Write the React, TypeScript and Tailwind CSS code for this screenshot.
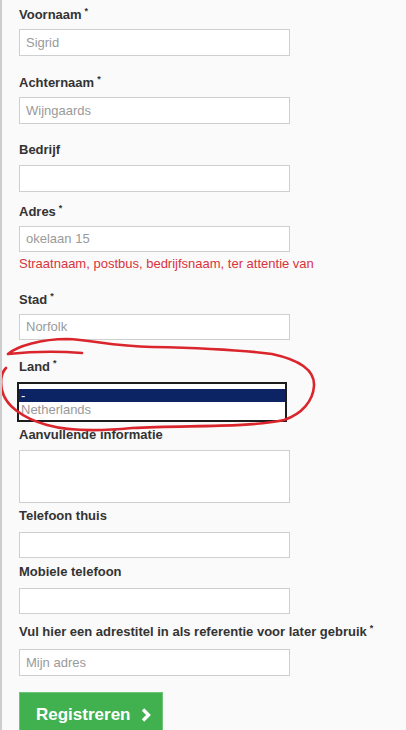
import React from "react";

const font = { fontFamily: '"Liberation Sans", Arial, sans-serif' };

const Label = ({ text, req, mb }: { text: string; req?: boolean; mb: string }) => (
  <div className={`h-[18px] text-[13px] leading-[18px] font-bold text-[#333] ${mb}`}>
    {text}
    {req && <span className="text-[9px] leading-none ml-[3px] relative -top-[5px]">*</span>}
  </div>
);

const Input = ({ value, h = "h-[27px]" }: { value?: string; h?: string }) => (
  <div className={`w-[271px] ${h} bg-white border border-[#cfcfcf] px-[6px] flex items-center text-[13px] text-[#9a9a9a]`}>
    {value}
  </div>
);

const App = () => {
  return (
    <div style={font} className="relative w-[406px] h-[730px] overflow-hidden bg-[#fafafa] border-l-2 border-[#cdcdcd]">
      <div className="pl-[17px] pt-[6px]">
        <Label text="Voornaam" req mb="mb-[5px]" />
        <Input value="Sigrid" />

        <div className="mt-[18px]">
          <Label text="Achternaam" req mb="mb-[5px]" />
          <Input value="Wijngaards" />
        </div>

        <div className="mt-[17px]">
          <Label text="Bedrijf" mb="mb-[6px]" />
          <Input />
        </div>

        <div className="mt-[11px]">
          <Label text="Adres" req mb="mb-[5px]" />
          <Input value="okelaan 15" h="h-[26px]" />
          <div className="mt-[3px] text-[13px] leading-[18px] text-[#d9333d]">
            Straatnaam, postbus, bedrijfsnaam, ter attentie van
          </div>
        </div>

        <div className="mt-[18px]">
          <Label text="Stad" req mb="mb-[5px]" />
          <Input value="Norfolk" h="h-[26px]" />
        </div>

        <div className="mt-[18px]">
          <Label text="Land" req mb="mb-[6px]" />
          <div className="-ml-[2px] w-[270px] h-[40px] border-2 border-[#1c1c1c] bg-white pt-[5px]">
            <div className="h-[13px] bg-[#0c2463] text-white text-[13px] leading-[13px] pl-[2px]">-</div>
            <div className="h-[15px] text-[#9a9a9a] text-[13px] leading-[15px] pl-[2px]">Netherlands</div>
          </div>
        </div>

        <div className="mt-[4px]">
          <Label text="Aanvullende informatie" mb="mb-[6px]" />
          <Input h="h-[53px]" />
        </div>

        <div className="mt-[4px]">
          <Label text="Telefoon thuis" mb="mb-[7px]" />
          <Input h="h-[26px]" />
        </div>

        <div className="mt-[5px]">
          <Label text="Mobiele telefoon" mb="mb-[7px]" />
          <Input h="h-[26px]" />
        </div>

        <div className="mt-[9px]">
          <Label text="Vul hier een adrestitel in als referentie voor later gebruik" req mb="mb-[8px]" />
          <Input value="Mijn adres" />
        </div>

        <button className="mt-[16px] w-[144px] h-[44px] bg-[#41b14f] border border-[#6cc476] flex items-start pt-[12px] pl-[16px] gap-[11px] text-white text-[17px] leading-[20px] font-bold">
          Registreren
          <svg width="11" height="14" viewBox="0 0 11 14" className="mt-[3px]">
            <path d="M2 1.5 L7.5 7 L2 12.5" fill="none" stroke="white" strokeWidth="3.4" />
          </svg>
        </button>
      </div>

      <svg
        className="absolute top-0 left-0 pointer-events-none"
        width="406"
        height="730"
        viewBox="0 0 406 730"
      >
        <path
          d="M80 353 C55 351 25 352 6 354 C15 346 40 339 65 339 C90 340 110 346 150 347 C200 348 240 350 270 354 C298 360 313 370 312 386 C311 401 300 414 282 420 C245 428 185 425 130 428 C100 431 70 432 45 425 C20 418 3 405 0 390 C-2 380 0 372 4 368"
          fill="none"
          stroke="#da252c"
          strokeWidth="2.6"
          strokeLinecap="round"
          strokeLinejoin="round"
        />
      </svg>
    </div>
  );
};

export default App;
